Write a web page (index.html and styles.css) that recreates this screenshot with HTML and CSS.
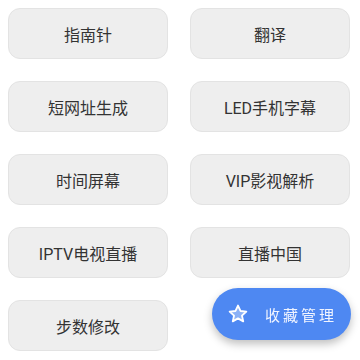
FILE: index.html
```html
<!DOCTYPE html>
<html lang="zh-CN">
<head>
    <meta charset="UTF-8">
    <meta name="viewport" content="width=device-width, initial-scale=1.0">
    <title>工具箱</title>
    <link rel="stylesheet" href="styles.css">
</head>
<body>
    <div class="tool-grid">
        <button class="tool-btn">指南针</button>
        <button class="tool-btn">翻译</button>
        <button class="tool-btn">短网址生成</button>
        <button class="tool-btn">LED手机字幕</button>
        <button class="tool-btn">时间屏幕</button>
        <button class="tool-btn">VIP影视解析</button>
        <button class="tool-btn">IPTV电视直播</button>
        <button class="tool-btn">直播中国</button>
        <button class="tool-btn">步数修改</button>
    </div>

    <button class="fab">
        <svg class="fab-icon" viewBox="0 0 24 24" width="22" height="22">
            <path d="M12 2.8l2.7 5.9 6.4.7-4.8 4.3 1.4 6.3L12 16.8 6.3 20l1.4-6.3-4.8-4.3 6.4-.7z" fill="rgba(255,255,255,0.35)" stroke="#ffffff" stroke-width="2" stroke-linejoin="round"/>
        </svg>
        <span class="fab-label">收藏管理</span>
    </button>
</body>
</html>
```

FILE: styles.css
```css
body { margin: 0; padding: 8px 10px 8px 8px; background: #ffffff; font-family: Roboto, "Noto Sans CJK SC", sans-serif; }
.tool-grid { display: grid; grid-template-columns: 160px 160px; column-gap: 22px; row-gap: 22px; }
.tool-btn { height: 51px; background: #eeeeee; border: 1px solid #e3e3e3; border-radius: 12px; font-family: Roboto, "Noto Sans CJK SC", sans-serif; font-size: 16px; color: #333333; padding: 0; }
.fab { position: fixed; left: 212px; top: 288px; width: 139px; height: 52px; border: none; border-radius: 26px; background: #4e88f2; box-shadow: 0 4px 8px rgba(0, 0, 0, 0.25); display: flex; align-items: center; padding: 0 0 0 15px; gap: 16px; color: #ffffff; }
.fab-icon { display: block; }
.fab-label { font-family: Roboto, "Noto Sans CJK SC", sans-serif; font-size: 15px; letter-spacing: 3px; color: #f0f4ff; }
```
